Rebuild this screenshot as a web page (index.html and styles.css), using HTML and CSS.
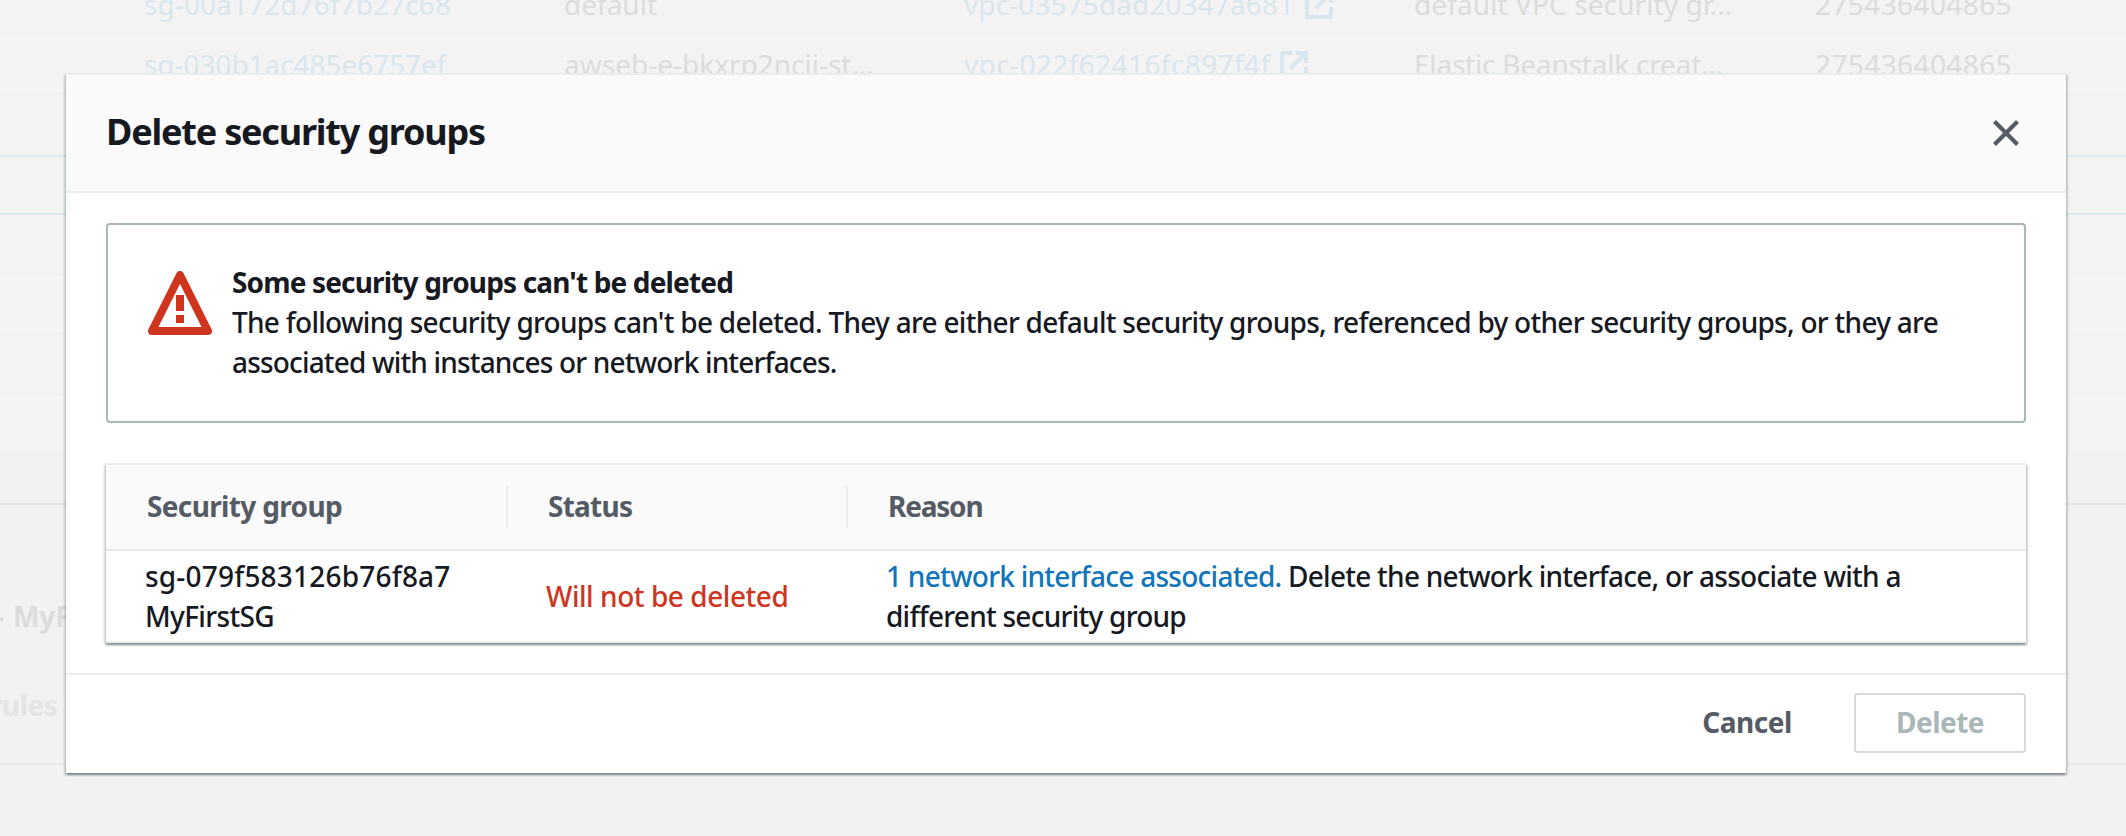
FILE: index.html
```html
<!DOCTYPE html>
<html lang="en">
<head>
<meta charset="utf-8">
<title>Delete security groups</title>
<link rel="stylesheet" href="styles.css">
</head>
<body>
<svg class="sprite" width="0" height="0">
  <symbol id="external" viewBox="0 0 28 28">
    <path d="M12 2H2V26H26V16" fill="none" stroke="currentColor" stroke-width="4" stroke-linejoin="round"/>
    <path d="M16 0H28V12H24V7L12 19L9 16L21 4H16Z" fill="currentColor"/>
  </symbol>
</svg>
<main class="page" aria-hidden="true">
  <div class="row">
    <span></span><span class="link sg">sg-00a172d76f7b27c68</span><span>default</span>
    <span class="link vpc">vpc-03575dad20347a681<svg class="ext"><use href="#external"/></svg></span>
    <span class="desc">default VPC security gr…</span><span class="owner">275436404865</span>
  </div>
  <div class="row">
    <span></span><span class="link sg sg-b">sg-030b1ac485e6757ef</span><span>awseb-e-bkxrp2ncij-st…</span>
    <span class="link vpc vpc-b">vpc-022f62416fc897f4f<svg class="ext"><use href="#external"/></svg></span>
    <span class="desc desc-b">Elastic Beanstalk creat…</span><span class="owner">275436404865</span>
  </div>
  <div class="row before-selected"></div>
  <div class="row selected"></div>
  <div class="row"></div>
  <div class="row"></div>
  <div class="row"></div>
  <div class="row"></div>
  <div class="table-end"></div>
  <section class="details">
    <h2 class="details-title"><span>-</span><span>MyFirstSG</span></h2>
    <div class="tab">rules</div>
  </section>
</main>

<div class="modal" role="dialog">
  <header class="modal-header">
    <h1 class="modal-title">Delete security groups</h1>
    <svg class="close" viewBox="0 0 28 28"><path d="M2.5 2.5L25.5 25.5M25.5 2.5L2.5 25.5" fill="none" stroke="#545b64" stroke-width="4.2"/></svg>
  </header>
  <div class="modal-body">
    <div class="alert">
      <svg class="warn" viewBox="0 0 64 64">
        <path d="M32 4L60 60H4Z" fill="none" stroke="#cf341e" stroke-width="8" stroke-linejoin="round"/>
        <path d="M28 24h8v16h-8zM28 44h8v8h-8z" fill="#cf341e"/>
      </svg>
      <div class="alert-text">
        <strong class="alert-title">Some security groups can't be deleted</strong>
        <p class="copy">The following security groups can't be deleted. They are either default security groups, referenced by other security groups, or they are <span class="tight">associated with instances or network interfaces.</span></p>
      </div>
    </div>
    <div class="table">
      <div class="thead">
        <div class="th th-group">Security group</div>
        <div class="th th-status">Status</div>
        <div class="th th-reason">Reason</div>
      </div>
      <div class="tr">
        <div class="td td-group"><span class="group-id">sg-079f583126b76f8a7</span><span class="group-name">MyFirstSG</span></div>
        <div class="td td-status">Will not be deleted</div>
        <div class="td td-reason copy"><a class="reason-link">1 network interface associated.</a> Delete the network interface, or associate with a different security group</div>
      </div>
    </div>
  </div>
  <footer class="modal-footer">
    <button class="btn cancel">Cancel</button>
    <button class="btn delete" disabled>Delete</button>
  </footer>
</div>
</body>
</html>
```
FILE: styles.css
```css
* { box-sizing: border-box; }

body {
  margin: 0;
  height: 836px;
  overflow: hidden;
  background: #f2f2f2;
  font: 500 28px/40px "Noto Sans", sans-serif;
  color: #16191f;
}

.sprite { position: absolute; }

/* Dimmed page behind the dialog */
.page { margin-top: -25px; font-weight: 400; color: #dcdcdc; }
.row {
  display: grid;
  grid-template-columns: 144px 420px 400px 450px 401px 1fr;
  align-items: center;
  height: 60px;
  border-bottom: 2px solid #f0f1f1;
  background: #f3f3f3;
  white-space: nowrap;
}
.row.before-selected { border-bottom-color: #f3f3f3; }
.row.selected {
  border-top: 2px solid #dcebeb;
  border-bottom-color: #dcebeb;
  background: #f1f4f3;
}
.link { color: #dae6ee; }
.sg { letter-spacing: 0.1px; }
.sg-b { letter-spacing: -0.05px; }
.vpc { display: flex; align-items: center; gap: 11px; letter-spacing: 0.1px; }
.vpc-b { gap: 10px; letter-spacing: 0.4px; }
.ext { width: 28px; height: 28px; margin-top: 2px; }
.desc { letter-spacing: 0.1px; }
.desc-b { letter-spacing: -0.2px; }
.owner { letter-spacing: 0.4px; }
.table-end { height: 50px; border-bottom: 2px solid #e4e5e5; }
.details { height: 260px; border-bottom: 2px solid #ebebeb; padding-top: 91px; font-weight: 700; }
.details-title {
  display: flex;
  gap: 9px;
  margin: 0 0 49px -5px;
  font-size: 28px;
  line-height: 40px;
}
.tab { margin-left: -10px; letter-spacing: -0.5px; color: #e3e5e6; }

/* Dialog */
.modal {
  position: absolute;
  left: 66px;
  top: 73px;
  width: 2000px;
  height: 700px;
  border-top: 2px solid #eaeded;
  background: #fff;
  box-shadow: 0 2px 2px 0 rgba(0, 28, 36, .3), 2px 2px 2px 0 rgba(0, 28, 36, .15), -2px 2px 2px 0 rgba(0, 28, 36, .15);
}
.modal-header {
  display: flex;
  align-items: center;
  justify-content: space-between;
  height: 118px;
  padding: 0 46px 0 40px;
  border-bottom: 2px solid #eaeded;
  background: #fafafa;
}
.modal-title {
  margin: -2px 0 0;
  font-size: 36px;
  line-height: 44px;
  font-weight: 700;
  letter-spacing: -1.2px;
}
.close { width: 28px; height: 28px; }
.modal-body { padding: 30px 40px; }

.alert {
  display: flex;
  gap: 20px;
  height: 200px;
  padding: 37px 38px 39px 40px;
  border: 2px solid #aab7b8;
  border-radius: 4px;
}
.warn { flex: none; width: 64px; height: 64px; margin-top: 9px; }
.alert-title { display: block; font-weight: 700; letter-spacing: -0.84px; }
.copy { margin: 0; letter-spacing: -0.72px; }
.tight { letter-spacing: -0.83px; }

.table {
  margin-top: 40px;
  border-top: 2px solid #eaeded;
  box-shadow: 0 2px 2px 0 rgba(0, 28, 36, .3), 2px 2px 2px 0 rgba(0, 28, 36, .15), -2px 2px 2px 0 rgba(0, 28, 36, .15);
}
.thead, .tr { display: grid; grid-template-columns: 402px 340px 1fr; align-items: center; border-bottom: 2px solid #eaeded; }
.thead { height: 86px; background: #fafafa; color: #545b64; font-weight: 700; }
.th { height: 42px; line-height: 41px; border-right: 2px solid #eaeded; padding-left: 40px; }
.th-group { padding-left: 41px; letter-spacing: -0.65px; }
.th-status { letter-spacing: -0.75px; }
.th-reason { border-right: 0; letter-spacing: -1.2px; }
.tr { height: 92px; }
.td { padding-left: 38px; }
.td-group { display: flex; flex-direction: column; padding-left: 39px; }
.group-id { letter-spacing: 0.2px; }
.group-name { letter-spacing: -0.64px; }
.td-status { letter-spacing: -0.45px; color: #cf341e; }
.td-reason { padding-right: 38px; letter-spacing: -0.74px; }
.reason-link { color: #1075b9; }

.modal-footer {
  display: flex;
  justify-content: flex-end;
  height: 100px;
  padding: 18px 40px 20px;
  border-top: 2px solid #eaeded;
}
.btn {
  height: 60px;
  padding: 0 0 2px;
  border: 2px solid transparent;
  border-radius: 4px;
  background: #fff;
  font: 700 28px/40px "Noto Sans", sans-serif;
  letter-spacing: -0.5px;
  color: #545b64;
}
.cancel { width: 152px; margin-right: 31px; }
.delete { width: 172px; border-color: #d5dbdb; color: #aab7b8; }
```
